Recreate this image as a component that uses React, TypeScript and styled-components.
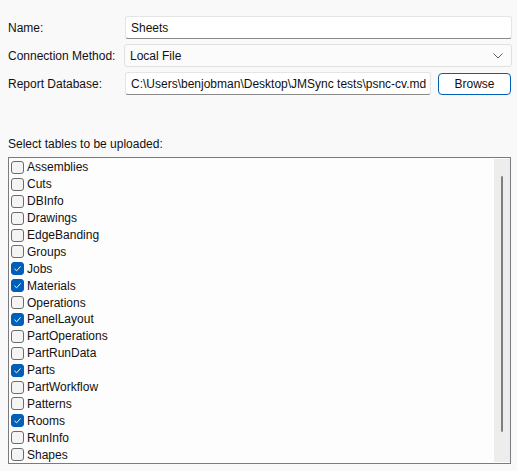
import React from "react";
import styled, { createGlobalStyle } from "styled-components";

const Global = createGlobalStyle`
  html, body { margin: 0; padding: 0; background: #f9f9f9; }
  body { font-family: "Segoe UI", "Liberation Sans", Arial, sans-serif; font-size: 12px; color: #111111; }
`;

const Page = styled.div`
  width: 517px;
  height: 471px;
  box-sizing: border-box;
  padding: 16px 5px 0 8px;
  display: flex;
  flex-direction: column;
  overflow: hidden;
`;

const FormRow = styled.div`
  display: grid;
  grid-template-columns: 117px 1fr;
  align-items: center;
  height: 23px;
  margin-bottom: 5px;
`;

const Label = styled.label`
  font-size: 12px;
  white-space: nowrap;
`;

const TextBox = styled.div`
  height: 23px;
  box-sizing: border-box;
  background: #ffffff;
  border: 1px solid #e5e5e5;
  border-bottom-color: #8a8a8a;
  border-radius: 3px;
  padding: 0 5px;
  display: flex;
  align-items: center;
  white-space: nowrap;
  overflow: hidden;
  font-size: 12px;
`;

const Combo = styled.div`
  height: 23px;
  box-sizing: border-box;
  margin-left: -1px;
  background: #fbfbfb;
  border: 1px solid #e0e0e0;
  border-radius: 3px;
  padding: 0 8px 0 5px;
  display: flex;
  align-items: center;
  justify-content: space-between;
  font-size: 12px;
`;

const PathRow = styled.div`
  display: grid;
  grid-template-columns: 306px 73px;
  column-gap: 7px;
  align-items: center;
`;

const BrowseButton = styled.button`
  height: 22px;
  box-sizing: border-box;
  background: #ffffff;
  border: 1px solid #005fb8;
  border-radius: 4px;
  font-family: inherit;
  font-size: 12px;
  color: #111111;
  padding: 0;
`;

const SectionLabel = styled.div`
  margin-top: 35px;
  height: 18px;
  line-height: 18px;
  font-size: 12px;
`;

const ListBox = styled.div`
  margin-top: 4px;
  width: 503px;
  height: 307px;
  box-sizing: border-box;
  border: 1px solid #7a7a80;
  background: #fdfdfd;
  display: flex;
`;

const Items = styled.div`
  flex: 1;
  display: flex;
  flex-direction: column;
  padding: 1px 0 0 2px;
`;

const Item = styled.div`
  height: 17px;
  display: flex;
  align-items: center;
  gap: 3px;
  font-size: 12px;
`;

const Box = styled.span<{ $checked: boolean }>`
  width: 13px;
  height: 13px;
  box-sizing: border-box;
  border-radius: 3px;
  border: 1px solid ${(p) => (p.$checked ? "#005fb8" : "#6b6b6b")};
  background: ${(p) => (p.$checked ? "#005fb8" : "#f4f4f4")};
  display: flex;
  align-items: center;
  justify-content: center;
`;

const ScrollTrack = styled.div`
  width: 16px;
  margin: 1px 0 1px 0;
  background: #ededed;
  display: flex;
  justify-content: center;
  padding-top: 17px;
  box-sizing: border-box;
`;

const ScrollThumb = styled.div`
  width: 2px;
  height: 256px;
  background: #808080;
  border-radius: 1px;
`;

const tables: [string, boolean][] = [
  ["Assemblies", false],
  ["Cuts", false],
  ["DBInfo", false],
  ["Drawings", false],
  ["EdgeBanding", false],
  ["Groups", false],
  ["Jobs", true],
  ["Materials", true],
  ["Operations", false],
  ["PanelLayout", true],
  ["PartOperations", false],
  ["PartRunData", false],
  ["Parts", true],
  ["PartWorkflow", false],
  ["Patterns", false],
  ["Rooms", true],
  ["RunInfo", false],
  ["Shapes", false],
];

const Check = () => (
  <svg width="9" height="9" viewBox="0 0 9 9">
    <polyline points="1.5,4.8 3.6,6.8 7.6,2.4" fill="none" stroke="#ffffff" strokeWidth="1" />
  </svg>
);

const Chevron = () => (
  <svg width="10" height="6" viewBox="0 0 10 6">
    <polyline points="0.5,0.5 5,5 9.5,0.5" fill="none" stroke="#5f5f5f" strokeWidth="1" />
  </svg>
);

export default function App() {
  return (
    <>
      <Global />
      <Page>
        <FormRow>
          <Label>Name:</Label>
          <TextBox>Sheets</TextBox>
        </FormRow>
        <FormRow>
          <Label>Connection Method:</Label>
          <Combo>
            <span>Local File</span>
            <Chevron />
          </Combo>
        </FormRow>
        <FormRow>
          <Label>Report Database:</Label>
          <PathRow>
            <TextBox>C:\Users\benjobman\Desktop\JMSync tests\psnc-cv.md</TextBox>
            <BrowseButton>Browse</BrowseButton>
          </PathRow>
        </FormRow>
        <SectionLabel>Select tables to be uploaded:</SectionLabel>
        <ListBox>
          <Items>
            {tables.map(([name, checked]) => (
              <Item key={name}>
                <Box $checked={checked}>{checked && <Check />}</Box>
                <span>{name}</span>
              </Item>
            ))}
          </Items>
          <ScrollTrack>
            <ScrollThumb />
          </ScrollTrack>
        </ListBox>
      </Page>
    </>
  );
}
